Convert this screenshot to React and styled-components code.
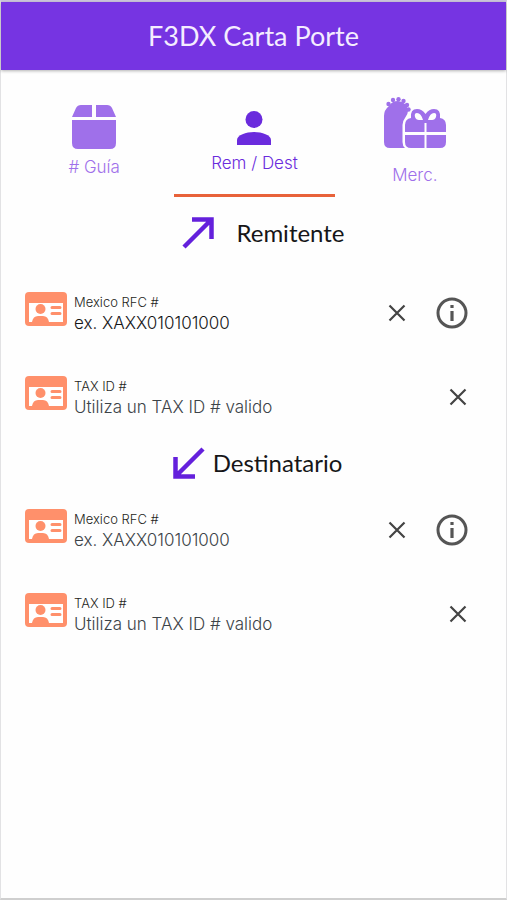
import React, { useState } from "react";
import styled, { createGlobalStyle } from "styled-components";

const GlobalStyle = createGlobalStyle`
  *, *::before, *::after { box-sizing: border-box; }
  body { margin: 0; background: #fefefe; font-family: Inter, "Liberation Sans", sans-serif; }
`;

const Page = styled.div`
  min-height: 100vh;
  display: flex;
  flex-direction: column;
  border-style: solid;
  border-width: 2px 1px;
  border-color: #cdc6dd #e2e2e4 #cfcfcf;
  background: #fefefe;
`;

const Header = styled.header`
  display: flex;
  align-items: center;
  justify-content: center;
  height: 68px;
  background: #7634e2;
  box-shadow: 0 1px 3px rgba(0, 0, 0, 0.3);
`;

const Title = styled.h1`
  margin: 0;
  color: #f4edff;
  font: 400 27px/36px Lato, sans-serif;
`;

const Tabs = styled.nav`
  display: grid;
  grid-template-columns: repeat(3, 1fr);
  height: 127px;
  padding: 0 11px 0 13px;
`;

const Tab = styled.button`
  display: flex;
  flex-direction: column;
  align-items: center;
  padding: ${(p) => p.$top}px 0 0;
  gap: ${(p) => p.$gap}px;
  border: 0;
  border-bottom: 3px solid ${(p) => (p.$active ? "#e8623a" : "transparent")};
  background: none;
  color: ${(p) => (p.$active ? "#6a2bdd" : "#9f70ea")};
  font: 300 17px/20px Inter, sans-serif;
  cursor: pointer;
`;

const SectionTitle = styled.h2`
  display: flex;
  align-items: center;
  justify-content: center;
  gap: ${(p) => p.$gap}px;
  height: ${(p) => p.$height}px;
  margin: 0;
  padding-left: ${(p) => p.$indent}px;
  padding-bottom: 2px;
  color: #161618;
  font: 400 24px/32px Lato, sans-serif;
`;

const Row = styled.div`
  display: flex;
  align-items: center;
  height: 84px;
  padding: 0 38px 0 24px;
`;

const CardIcon = styled.svg`
  flex: none;
  width: 42px;
  height: 34px;
  margin: 0 7px 8px 0;
`;

const Field = styled.div`
  flex: 1;
  min-width: 0;
  display: flex;
  flex-direction: column;
  padding-top: 2px;
`;

const Label = styled.label`
  color: #1f1f22;
  font-size: 13px;
  font-weight: 300;
  line-height: 18px;
`;

const TextInput = styled.input`
  width: 100%;
  height: 24px;
  padding: 0;
  border: 0;
  outline: none;
  background: transparent;
  color: #161618;
  font: 300 17px/24px Inter, sans-serif;
  &::placeholder { color: #3c4348; opacity: 1; }
`;

const Actions = styled.div`
  display: flex;
  align-items: center;
  gap: 29px;
`;

const IconButton = styled.button`
  display: flex;
  padding: 0;
  border: 0;
  background: none;
  color: #444;
  cursor: pointer;
`;

const BoxIcon = () => (
  <svg width="46" height="46" viewBox="0 0 46 46" fill="currentColor" aria-hidden="true">
    <path d="M10 1H21V13H1L5 4Q6.500 1 10 1ZM25 1H36Q39.500 1 41 4L45 13H25ZM1 16H45V39Q45 45 39 45H7Q1 45 1 39Z" />
  </svg>
);

const PersonIcon = () => (
  <svg width="34" height="34" viewBox="0 0 34 34" fill="currentColor" aria-hidden="true">
    <circle cx="17" cy="8.5" r="8.5" />
    <path d="M0 34V29C0 24 9 21 17 21S34 24 34 29V34Z" />
  </svg>
);

const GiftsIcon = () => (
  <svg width="64" height="52" viewBox="0 0 64 52" fill="currentColor" aria-hidden="true">
    <circle cx="5.500" cy="7" r="2.200" />
    <circle cx="10" cy="3" r="2.200" />
    <circle cx="15.500" cy="2.200" r="2.200" />
    <circle cx="20.500" cy="4" r="2.200" />
    <circle cx="24" cy="8" r="2.200" />
    <circle cx="25.500" cy="12.500" r="2.200" />
    <path d="M6 9Q9 4 15 4Q24 5 25 14Q25 17 22 21Q19.500 24 19.500 28V45Q19.500 49 22 51H7Q1 51 1 45V19Q1 13 6 9Z" />
    <path
      fillRule="evenodd"
      d="M22 35V28Q22 22 28 21Q27 12 34 12Q39 12 42.500 17Q46 12 51 12Q58 12 57 21Q63 22 63 28V35H43.500V26H41.500V35ZM40 23Q38 16 34 16Q31 16 32 20Q33 23 36 23ZM45 23H49Q52 23 53 20Q54 16 51 16Q47 16 45 23ZM22 38H41.500V51H28Q22 51 22 45ZM43.500 38H63V45Q63 51 57 51H43.500Z"
    />
  </svg>
);

const ArrowIcon = ({ down = false }) => (
  <svg width="32" height="32" viewBox="0 0 32 32" fill="none" stroke="#6420dc" strokeWidth="4.500" aria-hidden="true">
    <path d={down ? "M30 2L3 29M2.500 10V29.500H22" : "M2 30L29 3M10 2.500H29.500V22"} />
  </svg>
);

const CloseIcon = () => (
  <svg width="20" height="20" viewBox="0 0 20 20" stroke="currentColor" strokeWidth="2.2" aria-hidden="true">
    <path d="M2.500 2.500L17.500 17.500M17.500 2.500L2.500 17.500" />
  </svg>
);

const InfoIcon = () => (
  <svg width="32" height="32" viewBox="0 0 32 32" fill="none" aria-hidden="true">
    <circle cx="16" cy="16" r="14" stroke="#555" strokeWidth="3" />
    <path d="M16 14V24M16 8V11" stroke="#555" strokeWidth="3.200" />
  </svg>
);

const IdCard = () => (
  <CardIcon viewBox="0 0 42 34" aria-hidden="true">
    <rect width="42" height="34" rx="4" fill="#ff906b" />
    <path d="M4 11H38V30H24Q23 24 18 24H13Q8 24 7 30H4Z" fill="#fff" />
    <circle cx="15.500" cy="17" r="5" fill="#ff906b" />
    <path d="M27 15.500H35M27 21.500H35" stroke="#ff906b" strokeWidth="3" strokeLinecap="round" />
  </CardIcon>
);

const tabs = [
  { id: "guia", label: "# Guía", icon: <BoxIcon />, top: 34, gap: 7 },
  { id: "rem", label: "Rem / Dest", icon: <PersonIcon />, top: 41, gap: 8 },
  { id: "merc", label: "Merc.", icon: <GiftsIcon />, top: 27, gap: 16 },
];

function IdField({ id, label, placeholder, initial = "", info = false }) {
  const [value, setValue] = useState(initial);
  return (
    <Row>
      <IdCard />
      <Field>
        <Label htmlFor={id}>{label}</Label>
        <TextInput id={id} placeholder={placeholder} value={value} onChange={(e) => setValue(e.target.value)} />
      </Field>
      <Actions>
        <IconButton type="button" aria-label="Borrar" onClick={() => setValue("")}>
          <CloseIcon />
        </IconButton>
        {info && (
          <IconButton type="button" aria-label="Información">
            <InfoIcon />
          </IconButton>
        )}
      </Actions>
    </Row>
  );
}

export default function App() {
  const [active, setActive] = useState("rem");
  return (
    <>
      <GlobalStyle />
      <Page>
        <Header>
          <Title>F3DX Carta Porte</Title>
        </Header>
        <Tabs>
          {tabs.map((t) => (
            <Tab key={t.id} type="button" $active={active === t.id} $top={t.top} $gap={t.gap} onClick={() => setActive(t.id)}>
              {t.icon}
              {t.label}
            </Tab>
          ))}
        </Tabs>
        <main>
          <SectionTitle $gap={22} $height={74} $indent={20}>
            <ArrowIcon />
            Remitente
          </SectionTitle>
          <IdField id="rem-rfc" label="Mexico RFC #" placeholder="ex. XAXX010101000" initial="ex. XAXX010101000" info />
          <IdField id="rem-tax" label="TAX ID #" placeholder="Utiliza un TAX ID # valido" />
          <SectionTitle $gap={8} $height={49} $indent={8}>
            <ArrowIcon down />
            Destinatario
          </SectionTitle>
          <IdField id="dest-rfc" label="Mexico RFC #" placeholder="ex. XAXX010101000" info />
          <IdField id="dest-tax" label="TAX ID #" placeholder="Utiliza un TAX ID # valido" />
        </main>
      </Page>
    </>
  );
}
